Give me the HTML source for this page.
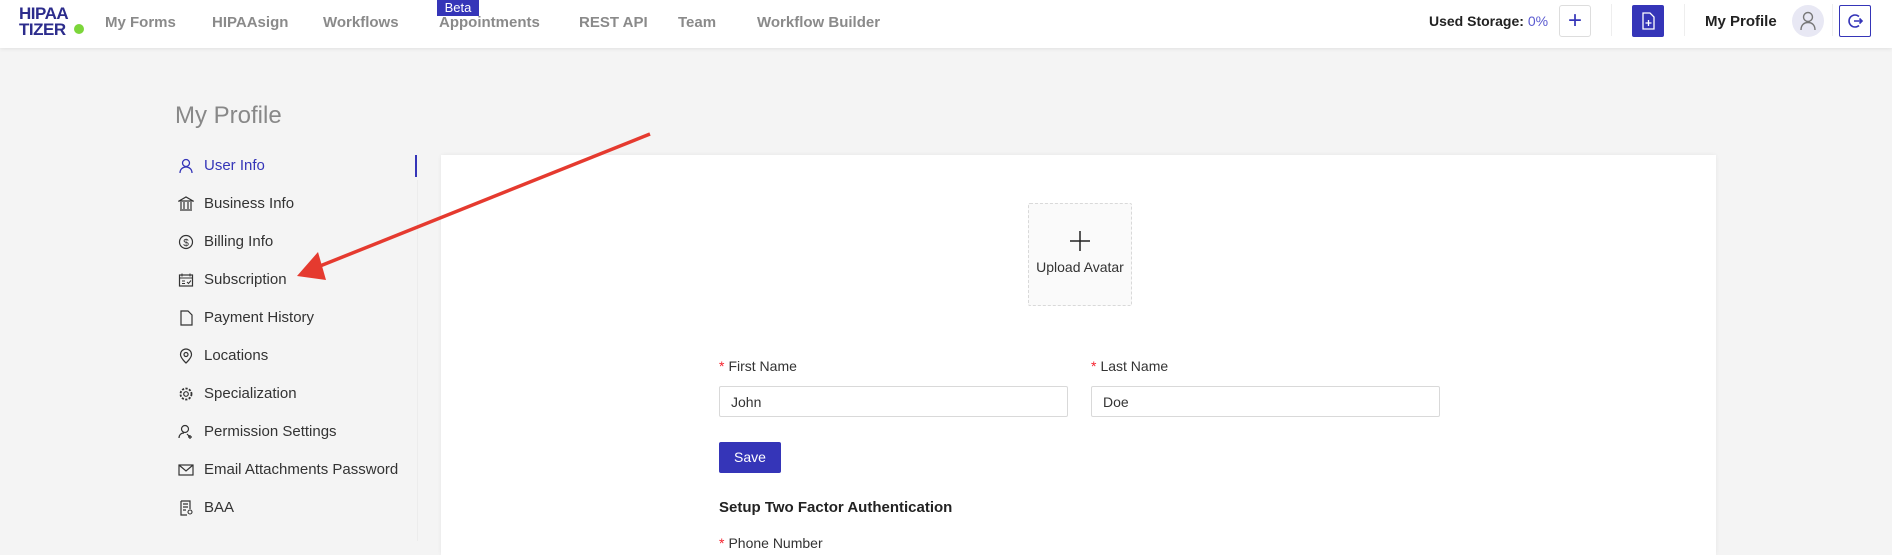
<!DOCTYPE html>
<html><head><meta charset="utf-8"><style>
*{box-sizing:border-box;margin:0;padding:0}
body{width:1892px;height:541px;overflow:hidden;background:#f4f4f4;font-family:"Liberation Sans",sans-serif;position:relative}
.hdr{position:absolute;left:0;top:0;width:1892px;height:48px;background:#fff;box-shadow:0 1px 4px rgba(0,0,0,.08)}
.nav{position:absolute;top:14px;font-size:15px;font-weight:bold;color:#8a8a8a}
.abs{position:absolute}
.menu{position:absolute;left:178px;font-size:15px;color:#333}
.menu span{position:absolute;left:26px;top:0;white-space:nowrap}
.menu svg{position:absolute;left:0;top:1px}
.lbl{position:absolute;font-size:14px;color:#333}
.lbl b{color:#f5222d;font-weight:normal;margin-right:4px}
.inp{position:absolute;height:31px;border:1px solid #d9d9d9;border-radius:2px;background:#fff;font-size:14px;color:#333;padding:7px 11px}
</style></head><body>
<div class="hdr"></div>
<div class="abs" style="left:19px;top:6px;font-weight:900;font-size:17px;line-height:16px;color:#2c2c8c;letter-spacing:-0.5px">HIPAA<br>TIZER</div>
<div class="abs" style="left:74px;top:24px;width:10px;height:10px;border-radius:50%;background:#7cd63a"></div>
<div class="nav" style="left:105px">My Forms</div>
<div class="nav" style="left:212px">HIPAAsign</div>
<div class="nav" style="left:323px">Workflows</div>
<div class="nav" style="left:439px">Appointments</div>
<div class="abs" style="left:437px;top:0;width:42px;height:16px;background:#3535b8;color:#fff;font-size:13px;text-align:center;line-height:15px">Beta</div>
<div class="nav" style="left:579px">REST API</div>
<div class="nav" style="left:678px">Team</div>
<div class="nav" style="left:757px">Workflow Builder</div>
<div class="abs" style="left:1429px;top:13px;font-size:14px;font-weight:bold;color:#222;white-space:nowrap">Used Storage: <span style="font-weight:normal;color:#5a5ad0">0%</span></div>
<div class="abs" style="left:1559px;top:5px;width:32px;height:32px;border:1px solid #ddd;border-radius:3px;color:#3535b8;font-size:24px;text-align:center;line-height:29px">+</div>
<div class="abs" style="left:1611px;top:4px;width:1px;height:32px;background:#eee"></div>
<div class="abs" style="left:1632px;top:5px;width:32px;height:32px;background:#3535b8;border-radius:2px"><svg width="32" height="32"><path d="M11 8h7l4 4v12H11z" fill="none" stroke="#fff" stroke-width="1.3"/><path d="M16.5 15v6M13.5 18h6" stroke="#fff" stroke-width="1.3"/></svg></div>
<div class="abs" style="left:1684px;top:4px;width:1px;height:32px;background:#eee"></div>
<div class="abs" style="left:1705px;top:13px;font-size:15px;font-weight:bold;color:#222">My Profile</div>
<div class="abs" style="left:1792px;top:5px;width:32px;height:32px;border-radius:50%;background:#e8e8f4"><svg width="32" height="32"><circle cx="16" cy="12" r="4.5" fill="none" stroke="#777" stroke-width="1.4"/><path d="M9 25c0-5 3-7.5 7-7.5s7 2.5 7 7.5" fill="none" stroke="#777" stroke-width="1.4"/></svg></div>
<div class="abs" style="left:1832px;top:4px;width:1px;height:32px;background:#eee"></div>
<div class="abs" style="left:1839px;top:5px;width:32px;height:32px;border:1px solid #3535b8;border-radius:2px"><svg width="30" height="30"><path d="M19 10.5a6 6 0 1 0 0 9" fill="none" stroke="#3535b8" stroke-width="1.6"/><path d="M14 15h8M19.5 12.5l2.5 2.5-2.5 2.5" fill="none" stroke="#3535b8" stroke-width="1.6"/></svg></div>

<div class="abs" style="left:175px;top:102px;font-size:24px;color:#888">My Profile</div>
<div class="abs" style="left:415px;top:155px;width:2px;height:22px;background:#3535b8"></div>
<div class="abs" style="left:417px;top:180px;width:1px;height:361px;background:#ececec"></div>

<div class="menu" style="top:157px;color:#3535b8"><svg width="16" height="16"><circle cx="8" cy="5" r="3.5" fill="none" stroke="#3535b8" stroke-width="1.3"/><path d="M2 15c0-4 3-6 6-6s6 2 6 6" fill="none" stroke="#3535b8" stroke-width="1.3"/></svg><span>User Info</span></div>
<div class="menu" style="top:195px"><svg width="16" height="16"><path d="M1 5l7-4 7 4zM2 14h12M3 6v7M6 6v7M10 6v7M13 6v7" fill="none" stroke="#333" stroke-width="1.2"/></svg><span>Business Info</span></div>
<div class="menu" style="top:233px"><svg width="16" height="16"><circle cx="8" cy="8" r="6.5" fill="none" stroke="#333" stroke-width="1.2"/><text x="8" y="12" font-size="10" text-anchor="middle" fill="#333" font-family="Liberation Sans">$</text></svg><span>Billing Info</span></div>
<div class="menu" style="top:271px"><svg width="16" height="16"><rect x="1.5" y="3" width="13" height="11" fill="none" stroke="#333" stroke-width="1.2"/><path d="M1.5 6h13M4 1.5v3M12 1.5v3M4 9h3M4 11.5h3M9 10l1.5 1.5 2.5-3" fill="none" stroke="#333" stroke-width="1"/></svg><span>Subscription</span></div>
<div class="menu" style="top:309px"><svg width="16" height="16"><path d="M3 1h7l4 4v10H3z" fill="none" stroke="#333" stroke-width="1.2"/></svg><span>Payment History</span></div>
<div class="menu" style="top:347px"><svg width="16" height="16"><path d="M8 15s-5.5-5-5.5-8.5a5.5 5.5 0 0 1 11 0C13.5 10 8 15 8 15z" fill="none" stroke="#333" stroke-width="1.2"/><circle cx="8" cy="6.5" r="2" fill="none" stroke="#333" stroke-width="1.2"/></svg><span>Locations</span></div>
<div class="menu" style="top:385px"><svg width="16" height="16"><circle cx="8" cy="8" r="5.5" fill="none" stroke="#333" stroke-width="1.8" stroke-dasharray="2.2 1.4"/><circle cx="8" cy="8" r="2.3" fill="none" stroke="#333" stroke-width="1.2"/></svg><span>Specialization</span></div>
<div class="menu" style="top:423px"><svg width="16" height="16"><circle cx="7" cy="5" r="3.5" fill="none" stroke="#333" stroke-width="1.2"/><path d="M1 14c0-3 2-5 5-5M9 10l3 3M12 11v4M10 13h4" fill="none" stroke="#333" stroke-width="1.2"/></svg><span>Permission Settings</span></div>
<div class="menu" style="top:461px"><svg width="16" height="16"><rect x="1" y="3" width="14" height="10" fill="none" stroke="#333" stroke-width="1.2"/><path d="M1 3l7 6 7-6" fill="none" stroke="#333" stroke-width="1.2"/></svg><span>Email Attachments Password</span></div>
<div class="menu" style="top:499px"><svg width="16" height="16"><path d="M3 1h9v8M3 1v14h6M5 4h5M5 7h5M5 10h3" fill="none" stroke="#333" stroke-width="1.2"/><circle cx="12" cy="12" r="2" fill="none" stroke="#333" stroke-width="1.1"/></svg><span>BAA</span></div>

<div class="abs" style="left:441px;top:155px;width:1275px;height:400px;background:#fff;box-shadow:0 0 4px rgba(0,0,0,.06)"></div>
<div class="abs" style="left:1028px;top:203px;width:104px;height:103px;border:1px dashed #d9d9d9;border-radius:2px;background:#fafafa"></div>
<div class="abs" style="left:1070px;top:231px;width:20px;height:20px"><svg width="20" height="20"><path d="M10 0v20M0 10h20" stroke="#222" stroke-width="1.5"/></svg></div>
<div class="abs" style="left:1028px;top:259px;width:104px;text-align:center;font-size:14px;color:#333">Upload Avatar</div>

<div class="lbl" style="left:719px;top:358px"><b>*</b>First Name</div>
<div class="inp" style="left:719px;top:386px;width:349px">John</div>
<div class="lbl" style="left:1091px;top:358px"><b>*</b>Last Name</div>
<div class="inp" style="left:1091px;top:386px;width:349px">Doe</div>
<div class="abs" style="left:719px;top:442px;width:62px;height:31px;background:#3535b8;border-radius:2px;color:#fff;font-size:14px;text-align:center;line-height:31px">Save</div>
<div class="abs" style="left:719px;top:499px;font-size:15px;font-weight:bold;color:#222">Setup Two Factor Authentication</div>
<div class="lbl" style="left:719px;top:535px"><b>*</b>Phone Number</div>

<svg class="abs" style="left:0;top:0" width="1892" height="541"><line x1="650" y1="134" x2="310" y2="270" stroke="#e53a2f" stroke-width="3.5"/><path d="M297 276L318 252L326 280z" fill="#e53a2f"/></svg>
</body></html>
